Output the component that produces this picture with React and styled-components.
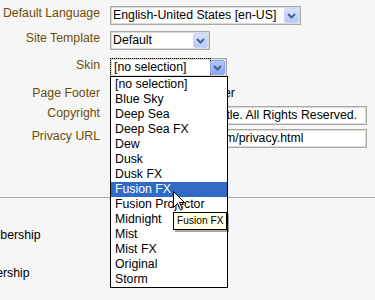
import React from 'react';
import styled, { createGlobalStyle } from 'styled-components';

const Global = createGlobalStyle`
  html, body { margin: 0; padding: 0; background: #f6f6f6; }
  body {
    font-family: "Liberation Sans", Arial, sans-serif;
    font-size: 12.3px;
    color: #000;
    overflow: hidden;
  }
`;

const Page = styled.div`
  position: relative;
  width: 375px;
  height: 300px;
  overflow: hidden;
  background: #f6f6f6;
`;

const Form = styled.div`
  display: flex;
  flex-direction: column;
  padding-top: 6px;
`;

const Row = styled.div`
  display: flex;
  align-items: flex-start;
  gap: 10px;
  margin-top: ${(p) => p.$top || 0}px;
`;

const Label = styled.div`
  width: 100px;
  flex: none;
  text-align: right;
  color: #6e4d05;
  line-height: 14px;
  white-space: nowrap;
`;

const Box = styled.div`
  box-sizing: border-box;
  width: ${(p) => p.$w}px;
  height: 19px;
  flex: none;
  background: #fff;
  border: 1px solid #a9a9a1;
  box-shadow: inset 0 0 0 1px #dcdbd3;
  padding: 1px;
  display: flex;
  align-items: center;
`;

const BoxText = styled.div`
  flex: 1;
  min-width: 0;
  height: 15px;
  line-height: 15px;
  padding-left: ${(p) => (p.$focus ? 2 : 1)}px;
  margin-right: ${(p) => (p.$focus ? 1 : 0)}px;
  white-space: nowrap;
  overflow: hidden;
  outline: ${(p) => (p.$focus ? '1px dotted #000' : 'none')};
  outline-offset: 1px;
`;

const ArrowButton = styled.div`
  flex: none;
  box-sizing: border-box;
  width: 15px;
  height: 15px;
  border: 1px solid ${(p) => (p.$hover ? '#8ea6ef' : '#c6d5fb')};
  border-radius: 2px;
  background: ${(p) =>
    p.$hover
      ? 'linear-gradient(#b3c8fb, #8ba6f1)'
      : 'linear-gradient(#d6e2fe, #b5c9f8)'};
  display: flex;
  align-items: center;
  justify-content: center;
`;

const Chevron = () => (
  <svg width="9" height="6" viewBox="0 0 9 6">
    <path d="M1 1 L4.5 4.5 L8 1" fill="none" stroke="#4d6185" strokeWidth="2" />
  </svg>
);

const Select = ({ w, value, focus, hover }) => (
  <Box $w={w}>
    <BoxText $focus={focus}>{value}</BoxText>
    <ArrowButton $hover={hover}>
      <Chevron />
    </ArrowButton>
  </Box>
);

const PlainText = styled.div`
  line-height: 14px;
  padding-left: 23px;
  white-space: nowrap;
`;

const List = styled.div`
  position: absolute;
  left: 110px;
  top: 76px;
  width: 118px;
  box-sizing: border-box;
  border: 1px solid #000;
  background: #fff;
  display: flex;
  flex-direction: column;
`;

const Option = styled.div`
  height: 15px;
  line-height: 15px;
  padding-left: 4px;
  white-space: nowrap;
  background: ${(p) => (p.$selected ? '#316ac5' : 'transparent')};
  color: ${(p) => (p.$selected ? '#fff' : '#000')};
`;

const Tooltip = styled.div`
  position: absolute;
  left: 173px;
  top: 212px;
  box-sizing: border-box;
  height: 18px;
  line-height: 16px;
  padding: 0 3px;
  font-size: 10.2px;
  border: 1px solid #000;
  background: #ffffe1;
  box-shadow: 2px 2px 0 rgba(0, 0, 0, 0.35);
  white-space: nowrap;
`;

const Cursor = styled.svg`
  position: absolute;
  left: 173px;
  top: 191px;
`;

const Section = styled.div`
  margin-top: 49px;
  border-top: 1px solid #a9a9bb;
  padding-top: 30px;
  display: flex;
  flex-direction: column;
  gap: 24px;
`;

const SectionLabel = styled.div`
  line-height: 14px;
  white-space: nowrap;
  color: #000;
  margin-left: ${(p) => p.$shift}px;
`;

const skins = [
  '[no selection]',
  'Blue Sky',
  'Deep Sea',
  'Deep Sea FX',
  'Dew',
  'Dusk',
  'Dusk FX',
  'Fusion FX',
  'Fusion Projector',
  'Midnight',
  'Mist',
  'Mist FX',
  'Original',
  'Storm',
];

export default function App() {
  return (
    <Page>
      <Global />
      <Form>
        <Row>
          <Label>Default Language</Label>
          <Select w={191} value="English-United States [en-US]" />
        </Row>
        <Row $top={6}>
          <Label>Site Template</Label>
          <Select w={100} value="Default" />
        </Row>
        <Row $top={8}>
          <Label>Skin</Label>
          <Select w={117} value="[no selection]" focus hover />
        </Row>
        <Row $top={9}>
          <Label>Page Footer</Label>
          <PlainText>Show Page Footer</PlainText>
        </Row>
        <Row $top={6}>
          <Label>Copyright</Label>
          <Box $w={257}>
            <BoxText>Copyright: My Site Title. All Rights Reserved.</BoxText>
          </Box>
        </Row>
        <Row $top={4}>
          <Label>Privacy URL</Label>
          <Box $w={257}>
            <BoxText>http://www.mysite.com/privacy.html</BoxText>
          </Box>
        </Row>
      </Form>
      <Section>
        <SectionLabel $shift={-27}>Membership</SectionLabel>
        <SectionLabel $shift={-38}>Membership</SectionLabel>
      </Section>

      <List>
        {skins.map((s) => (
          <Option key={s} $selected={s === 'Fusion FX'}>
            {s}
          </Option>
        ))}
      </List>
      <Tooltip>Fusion FX</Tooltip>
      <Cursor width="13" height="21" viewBox="0 0 13 21">
        <path
          d="M0.5 0.5 L0.5 16.5 L4.5 12.5 L7.5 19 L9.5 18 L6.5 11.5 L11.5 11.5 Z"
          fill="#fff"
          stroke="#000"
          strokeWidth="1"
          strokeLinejoin="miter"
        />
      </Cursor>
    </Page>
  );
}
